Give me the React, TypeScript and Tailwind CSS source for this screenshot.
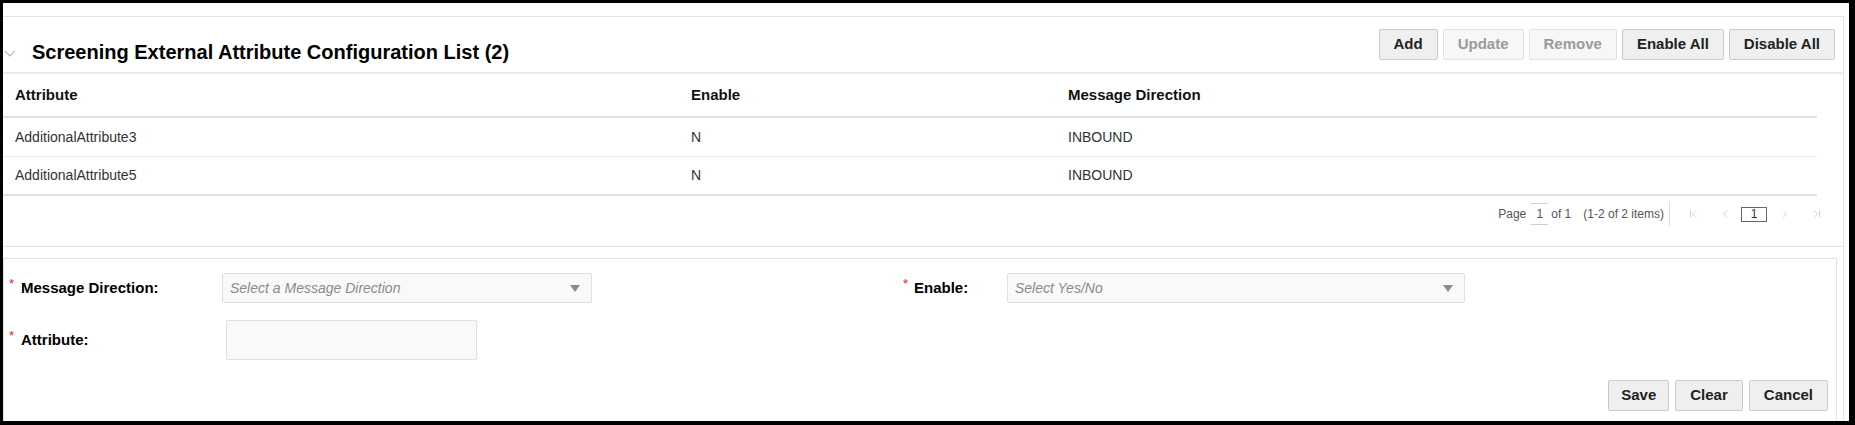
import React from "react";
import { ChevronFirst, ChevronLast, ChevronLeft, ChevronRight } from "lucide-react";

const rows = [
  { attribute: "AdditionalAttribute3", enable: "N", direction: "INBOUND" },
  { attribute: "AdditionalAttribute5", enable: "N", direction: "INBOUND" },
];

function Btn({ label, disabled, tight }: { label: string; disabled?: boolean; tight?: boolean }) {
  const pad = tight ? "px-[12px]" : "px-[14px]";
  return (
    <button
      className={
        disabled
          ? `h-[31px] ${pad} rounded-[2px] border border-[#e2e2e2] bg-[#f7f7f7] text-[15px] font-bold text-[#9a9a9a]`
          : `h-[31px] ${pad} rounded-[2px] border border-[#cbcbcb] bg-[#efefef] text-[15px] font-bold text-[#222]`
      }
    >
      {label}
    </button>
  );
}

function Caret() {
  return (
    <svg width="10" height="7" viewBox="0 0 10 7">
      <path d="M0 0 L10 0 L5 7 Z" fill="#8a8a8a" />
    </svg>
  );
}

function Select({ placeholder, width }: { placeholder: string; width: string }) {
  return (
    <div className={`${width} h-[30px] flex items-center justify-between rounded-[2px] border border-[#e0e0e0] bg-[#f9f9f9] pl-[7px] pr-[11px]`}>
      <span className="text-[14px] italic text-[#8a8a8a]">{placeholder}</span>
      <Caret />
    </div>
  );
}

function Req() {
  return <span className="w-[12px] -mt-[9px] text-[13px] leading-none text-[#d22]">*</span>;
}

export default function App() {
  return (
    <div className="w-[1855px] h-[425px] box-border flex flex-col overflow-hidden bg-white border-solid border-black border-t-[3px] border-l-[3px] border-r-[6px] border-b-[4px] font-['Liberation_Sans',Arial,sans-serif] text-[#222]">
      <div className="mt-[13px] mr-[5px] flex-1 flex flex-col border-t border-r border-[#e3e3e3]">
        {/* list section */}
        <div className="border-b border-[#e3e3e3]">
          <div className="h-[57px] flex justify-between border-b-2 border-[#ececec]">
            <div className="flex items-start pt-[23px]">
              <svg className="ml-[1px] mt-[10px]" width="12" height="7" viewBox="0 0 12 7">
                <polyline points="1,1 6,6 11,1" fill="none" stroke="#b5b5b5" strokeWidth="1.2" />
              </svg>
              <h2 className="ml-[16px] text-[20px] leading-[24px] font-bold text-black">
                Screening External Attribute Configuration List (2)
              </h2>
            </div>
            <div className="flex gap-[5px] pt-[12px] pr-[8px]">
              <Btn label="Add" />
              <Btn label="Update" disabled />
              <Btn label="Remove" disabled />
              <Btn label="Enable All" />
              <Btn label="Disable All" />
            </div>
          </div>

          <div className="mr-[26px]">
            <div className="grid grid-cols-[676px_377px_1fr] h-[44px] items-center border-b-2 border-[#e2e2e2] text-[15px] font-bold text-[#111]">
              <div className="pl-3">Attribute</div>
              <div className="pl-3">Enable</div>
              <div className="pl-3">Message Direction</div>
            </div>
            {rows.map((r, i) => (
              <div
                key={r.attribute}
                className={
                  i === rows.length - 1
                    ? "grid grid-cols-[676px_377px_1fr] h-[39px] items-center border-b-2 border-[#e2e2e2] text-[14px] text-[#333]"
                    : "grid grid-cols-[676px_377px_1fr] h-[39px] items-center border-b border-[#e8e8e8] text-[14px] text-[#333]"
                }
              >
                <div className="pl-3">{r.attribute}</div>
                <div className="pl-3">{r.enable}</div>
                <div className="pl-3">{r.direction}</div>
              </div>
            ))}
          </div>

          <div className="flex justify-end items-center h-[24px] mt-[6px] mb-[20px] pr-[20px] text-[12px] text-[#555]">
            <span>Page</span>
            <span className="ml-[5px] w-[17px] h-[22px] flex items-end justify-center pb-[1px] border-y border-[#cfcfcf]">1</span>
            <span className="ml-[3px]">of 1</span>
            <span className="ml-[12px]">(1-2 of 2 items)</span>
            <span className="ml-[5px] h-[24px] border-l border-[#dcdcdc]" />
            <ChevronFirst className="ml-[17px]" size={12} strokeWidth={1.5} color="#c2c2c2" />
            <ChevronLeft className="ml-[20px]" size={12} strokeWidth={1.5} color="#c2c2c2" />
            <span className="ml-[10px] w-[26px] h-[15px] flex items-center justify-center border border-[#666] text-[12px] text-[#333]">1</span>
            <ChevronRight className="ml-[12px]" size={12} strokeWidth={1.5} color="#c2c2c2" />
            <ChevronLast className="ml-[20px]" size={12} strokeWidth={1.5} color="#c2c2c2" />
          </div>
        </div>

        {/* form section */}
        <div className="mt-[11px] mr-[6px] flex-1 flex flex-col border-t border-r border-l border-[#e3e3e3]">
          <div className="mt-[14px] h-[30px] flex items-center">
            <div className="w-[218px] flex items-center pl-[5px]">
              <Req />
              <span className="text-[15px] font-bold text-black">Message Direction:</span>
            </div>
            <Select placeholder="Select a Message Direction" width="w-[370px]" />
            <div className="ml-[311px] w-[104px] flex items-center">
              <span className="w-[11px] -mt-[9px] text-[13px] leading-none text-[#d22]">*</span>
              <span className="text-[15px] font-bold text-black">Enable:</span>
            </div>
            <Select placeholder="Select Yes/No" width="w-[458px]" />
          </div>

          <div className="mt-[17px] h-[40px] flex items-center">
            <div className="w-[222px] flex items-center pl-[5px]">
              <Req />
              <span className="text-[15px] font-bold text-black">Attribute:</span>
            </div>
            <div className="w-[251px] h-[40px] rounded-[2px] border border-[#e0e0e0] bg-[#f9f9f9]" />
          </div>

          <div className="mt-[20px] flex justify-end gap-[6px] pr-[8px]">
            <Btn label="Save" tight />
            <Btn label="Clear" />
            <Btn label="Cancel" />
          </div>
        </div>
      </div>
    </div>
  );
}
